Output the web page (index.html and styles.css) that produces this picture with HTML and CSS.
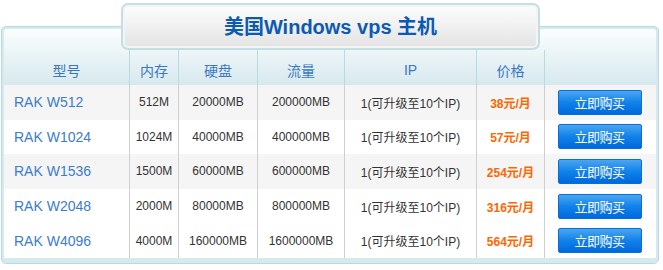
FILE: index.html
```html
<!DOCTYPE html>
<html lang="zh-CN">
  <head>
    <meta charset="utf-8" />
    <title>美国Windows vps 主机</title>
    <link rel="stylesheet" href="styles.css">
  </head>
  <body>
    <div class="page">
      <div class="title-box">
        <h2 class="title">美国Windows vps 主机</h2>
      </div>
      <div class="panel">
        <div class="row head">
          <div class="cell">型号</div>
          <div class="cell">内存</div>
          <div class="cell">硬盘</div>
          <div class="cell">流量</div>
          <div class="cell">IP</div>
          <div class="cell">价格</div>
          <div class="cell"></div>
        </div>
        <div class="row odd">
          <div class="cell name">RAK W512</div>
          <div class="cell">512M</div>
          <div class="cell">20000MB</div>
          <div class="cell">200000MB</div>
          <div class="cell">1(可升级至10个IP)</div>
          <div class="cell price">38元/月</div>
          <div class="cell"><button class="buy">立即购买</button></div>
        </div>
        <div class="row">
          <div class="cell name">RAK W1024</div>
          <div class="cell">1024M</div>
          <div class="cell">40000MB</div>
          <div class="cell">400000MB</div>
          <div class="cell">1(可升级至10个IP)</div>
          <div class="cell price">57元/月</div>
          <div class="cell"><button class="buy">立即购买</button></div>
        </div>
        <div class="row odd">
          <div class="cell name">RAK W1536</div>
          <div class="cell">1500M</div>
          <div class="cell">60000MB</div>
          <div class="cell">600000MB</div>
          <div class="cell">1(可升级至10个IP)</div>
          <div class="cell price">254元/月</div>
          <div class="cell"><button class="buy">立即购买</button></div>
        </div>
        <div class="row">
          <div class="cell name">RAK W2048</div>
          <div class="cell">2000M</div>
          <div class="cell">80000MB</div>
          <div class="cell">800000MB</div>
          <div class="cell">1(可升级至10个IP)</div>
          <div class="cell price">316元/月</div>
          <div class="cell"><button class="buy">立即购买</button></div>
        </div>
        <div class="row">
          <div class="cell name">RAK W4096</div>
          <div class="cell">4000M</div>
          <div class="cell">160000MB</div>
          <div class="cell">1600000MB</div>
          <div class="cell">1(可升级至10个IP)</div>
          <div class="cell price">564元/月</div>
          <div class="cell"><button class="buy">立即购买</button></div>
        </div>
      </div>
    </div>
  </body>
</html>
```

FILE: styles.css
```css
body {
  margin: 0;
  background-color: white;
  font-family: "Liberation Sans", "Noto Sans CJK SC", sans-serif;
  color: #333;
}
.page {
  padding: 3px 0 0 1px;
}
.title-box {
  position: relative;
  z-index: 1;
  box-sizing: border-box;
  width: 419px;
  height: 47px;
  margin: 0 0 -24px 120px;
  border: 2px solid #c3dfe4;
  border-radius: 7px;
  background: linear-gradient(#fdfdfd, #e3e3e3);
  box-shadow: inset 0 0 0 2px #f4f4f4;
  display: flex;
  align-items: center;
  justify-content: center;
}
.title {
  margin: 0 0 2px 0;
  font-size: 20px;
  font-weight: bold;
  color: #0c5ab2;
}
.panel {
  box-sizing: border-box;
  width: 658px;
  border: 1px solid #b8d9de;
  border-radius: 5px;
  padding: 2px 2px 5px 2px;
  background-color: #d5eaee;
}
.row {
  display: grid;
  grid-template-columns: 125px 49px 79px 87px 132px 68px 112px;
  height: 34.6px;
  background-color: white;
  font-size: 12px;
}
.row.odd {
  background-color: #f5f5f5;
}
.row.head {
  height: 56px;
  align-items: end;
  background: linear-gradient(#fbfefe, #d7e9ee);
  border-radius: 3px 3px 0 0;
  font-size: 14px;
  color: #3a78c2;
}
.cell {
  display: flex;
  align-items: center;
  justify-content: center;
  border-left: 1px solid #cfcfcf;
  white-space: nowrap;
}
.head .cell {
  height: 35px;
  padding-top: 4px;
  box-sizing: border-box;
  border-left-color: #b6dbe0;
}
.cell:first-child {
  border-left: none;
}
.name {
  justify-content: flex-start;
  padding-left: 10px;
  font-size: 14px;
  color: #3c7ccb;
}
.price {
  font-weight: bold;
  color: #ff6600;
}
.buy {
  width: 84px;
  height: 25px;
  margin-right: 2px;
  border: 1px solid #0a6ed9;
  border-radius: 2px;
  background: linear-gradient(#4aa6f0, #1182ea 50%, #0068dc);
  color: white;
  font-family: "Liberation Sans", "Noto Sans CJK SC", sans-serif;
  font-size: 13px;
  letter-spacing: -0.5px;
  padding: 0;
}
```
